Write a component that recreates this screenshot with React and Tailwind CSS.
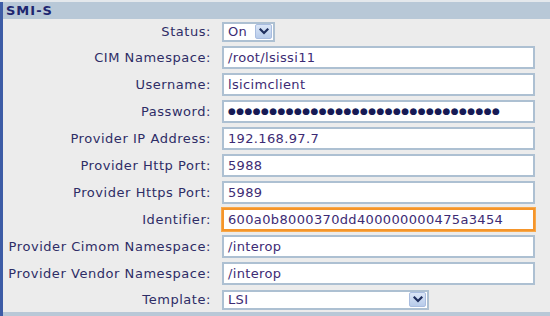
import React from "react";

const font = { fontFamily: '"DejaVu Sans", Verdana, sans-serif' };

function Chevron() {
  return (
    <svg width="10" height="7" viewBox="0 0 10 7">
      <path d="M1.5 1.5 L5 5 L8.5 1.5" fill="none" stroke="#1f2f5e" strokeWidth="2.2" strokeLinecap="square" />
    </svg>
  );
}

function Arrow() {
  return (
    <div className="w-[17px] h-[15px] rounded-[2px] bg-gradient-to-b from-[#dbe6f7] to-[#b7cbea] border border-[#a9bde0] flex items-center justify-center">
      <Chevron />
    </div>
  );
}

function Row({ label, h = "h-[27px]", children }) {
  return (
    <div className={`flex items-center ${h}`}>
      <div className="w-[209px] text-right text-[13px] tracking-[0.55px] text-[#2e2d66] leading-none pr-[1px] whitespace-nowrap">{label}</div>
      <div className="pl-[10px] flex items-center">{children}</div>
    </div>
  );
}

function TextBox({ value, focus }) {
  return (
    <div
      className={`w-[313px] h-[23px] bg-white flex items-center pl-[4px] text-[13px] tracking-[0.35px] text-[#3d2b74] leading-none border-2 overflow-hidden whitespace-nowrap ${
        focus ? "border-[#f5952a] ring-1 ring-[#f7a94c]" : "border-[#adc0d2]"
      }`}
    >
      {value}
    </div>
  );
}

export default function App() {
  const dots = "●".repeat(33);
  return (
    <div style={font} className="w-[550px] h-[316px] bg-[#ececec] flex flex-col overflow-hidden">
      <div className="h-[2px] bg-[#e4e8ec]" />
      <div className="flex flex-1">
        <div className="w-[3px] bg-[#3d5ca6]" />
        <div className="flex-1 flex flex-col">
          <div className="h-[17px] bg-[#b8c8d7] flex items-center pl-[3px] text-[13px] tracking-[1px] font-bold text-[#1e2670] leading-none">
            SMI-S
          </div>
          <Row label="Status:" h="h-[25px]">
            <div className="w-[53px] h-[20px] bg-white border-2 border-[#adc0d2] flex items-center justify-between pl-[4px] pr-[1px] text-[13px] tracking-[0.35px] text-[#3d2b74] leading-none">
              <span>On</span>
              <Arrow />
            </div>
          </Row>
          <Row label="CIM Namespace:">
            <TextBox value="/root/lsissi11" />
          </Row>
          <Row label="Username:">
            <TextBox value="lsicimclient" />
          </Row>
          <Row label="Password:">
            <TextBox value={<span className="text-[9px] tracking-[0.4px] text-[#161a55]">{dots}</span>} />
          </Row>
          <Row label="Provider IP Address:">
            <TextBox value="192.168.97.7" />
          </Row>
          <Row label="Provider Http Port:">
            <TextBox value="5988" />
          </Row>
          <Row label="Provider Https Port:">
            <TextBox value="5989" />
          </Row>
          <Row label="Identifier:">
            <TextBox value="600a0b8000370dd400000000475a3454" focus />
          </Row>
          <Row label="Provider Cimom Namespace:">
            <TextBox value="/interop" />
          </Row>
          <Row label="Provider Vendor Namespace:">
            <TextBox value="/interop" />
          </Row>
          <Row label="Template:" h="h-[25px]">
            <div className="w-[207px] h-[20px] bg-white border-2 border-[#adc0d2] flex items-center justify-between pl-[4px] pr-[1px] text-[13px] tracking-[0.35px] text-[#3d2b74] leading-none">
              <span>LSI</span>
              <Arrow />
            </div>
          </Row>
          <div className="flex-1 bg-[#b8c8d7]" />
        </div>
      </div>
    </div>
  );
}
